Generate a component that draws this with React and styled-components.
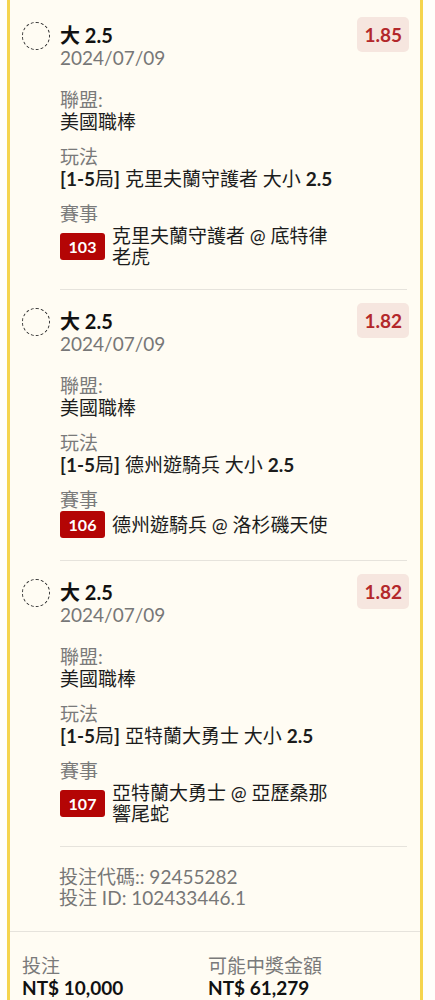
import React from 'react';
import styled, {createGlobalStyle} from 'styled-components';

const GlobalStyle = createGlobalStyle`
  html, body {
    margin: 0;
    padding: 0;
    background-color: #fffefa;
  }
  body {
    font-family: Lato, 'Noto Sans CJK TC', sans-serif;
    color: #1c1c1c;
  }
`;

const Card = styled.div`
  margin: 0 12px 0 7px;
  background-color: #fffcf3;
  border-left: 3px solid #f5d44c;
  border-right: 3px solid #f5d44c;
  padding-top: 4px;
`;

const Legs = styled.div`
  padding: 0 13px 0 12px;
`;

const Leg = styled.div`
  display: flex;
  align-items: flex-start;
  padding-top: 13px;
`;

const Marker = styled.div`
  width: 26px;
  height: 26px;
  border: 1px dashed #333;
  border-radius: 50%;
  margin-top: 5px;
  margin-right: 10px;
  flex-shrink: 0;
`;

const Body = styled.div`
  flex: 1;
  min-width: 0;
  padding-bottom: 22px;
  border-bottom: 1px solid #e6e3dc;
`;

const Header = styled.div`
  display: flex;
  justify-content: space-between;
  align-items: flex-start;
`;

const Title = styled.div`
  margin-top: 6px;
  font-size: 20px;
  line-height: 24px;
  font-weight: 700;
  color: #111;
`;

const DateText = styled.div`
  font-size: 19px;
  line-height: 22px;
  color: #777;
`;

const Odds = styled.div`
  margin-right: -2px;
  padding: 0 7px;
  height: 35px;
  display: flex;
  align-items: center;
  border-radius: 5px;
  background-color: #f6e6df;
  color: #b3282b;
  font-size: 19px;
  font-weight: 700;
`;

const Section = styled.div`
  margin-top: ${({$first}) => ($first ? '20px' : '13px')};
`;

const Label = styled.div`
  font-size: 19px;
  line-height: 22px;
  color: #7a7a7a;
`;

const Value = styled.div`
  font-size: 19px;
  line-height: 22px;
  color: #1c1c1c;
`;

const Num = styled.span`
  font-weight: 700;
`;

const MatchRow = styled.div`
  display: flex;
  align-items: center;
  gap: 7px;
`;

const MatchId = styled.div`
  flex-shrink: 0;
  width: 45px;
  height: 27px;
  display: flex;
  align-items: center;
  justify-content: center;
  border-radius: 3px;
  background-color: #b40505;
  color: #fff;
  font-size: 16px;
  font-weight: 700;
`;

const MatchName = styled.div`
  max-width: 230px;
  font-size: 19px;
  line-height: 21px;
  color: #1c1c1c;
`;

const BetInfo = styled.div`
  margin-left: 37px;
  padding: 19px 0 23px;
  font-size: 19px;
  line-height: 21px;
  color: #777;
`;

const Footer = styled.div`
  display: grid;
  grid-template-columns: 186px 1fr;
  padding: 23px 12px 20px;
  border-top: 1px solid #e6e3dc;
`;

const FooterLabel = styled.div`
  font-size: 19px;
  line-height: 22px;
  color: #7a7a7a;
`;

const Amount = styled.div`
  font-size: 19px;
  line-height: 22px;
  font-weight: 700;
  color: #111;
`;

const legs = [
  {odds: '1.85', team: '克里夫蘭守護者', id: '103', match: '克里夫蘭守護者 @ 底特律老虎'},
  {odds: '1.82', team: '德州遊騎兵', id: '106', match: '德州遊騎兵 @ 洛杉磯天使'},
  {odds: '1.82', team: '亞特蘭大勇士', id: '107', match: '亞特蘭大勇士 @ 亞歷桑那響尾蛇'},
];

const App = () => (
  <>
    <GlobalStyle />
    <Card>
      <Legs>
        {legs.map((leg) => (
          <Leg key={leg.id}>
            <Marker />
            <Body>
              <Header>
                <div>
                  <Title>大 2.5</Title>
                  <DateText>2024/07/09</DateText>
                </div>
                <Odds>{leg.odds}</Odds>
              </Header>
              <Section $first>
                <Label>聯盟:</Label>
                <Value>美國職棒</Value>
              </Section>
              <Section>
                <Label>玩法</Label>
                <Value>
                  <Num>[1-5</Num>局<Num>]</Num> {leg.team} 大小 <Num>2.5</Num>
                </Value>
              </Section>
              <Section>
                <Label>賽事</Label>
                <MatchRow>
                  <MatchId>{leg.id}</MatchId>
                  <MatchName>{leg.match}</MatchName>
                </MatchRow>
              </Section>
            </Body>
          </Leg>
        ))}
        <BetInfo>
          <div>投注代碼:: 92455282</div>
          <div>投注 ID: 102433446.1</div>
        </BetInfo>
      </Legs>
      <Footer>
        <div>
          <FooterLabel>投注</FooterLabel>
          <Amount>NT$ 10,000</Amount>
        </div>
        <div>
          <FooterLabel>可能中獎金額</FooterLabel>
          <Amount>NT$ 61,279</Amount>
        </div>
      </Footer>
    </Card>
  </>
);

export default App;
